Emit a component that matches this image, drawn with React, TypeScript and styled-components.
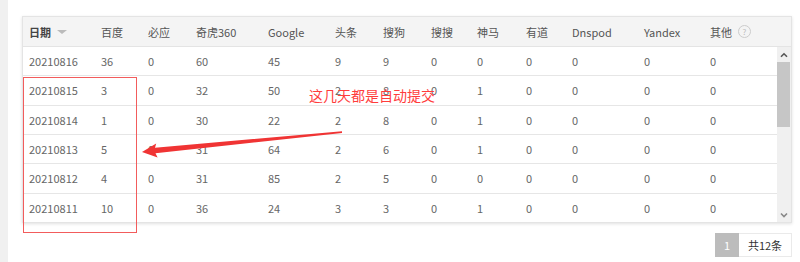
import React from "react";
import styled, { createGlobalStyle } from "styled-components";

const GlobalStyle = createGlobalStyle`
  html, body { margin: 0; padding: 0; background: #fff; }
  body {
    font-family: "Noto Sans CJK SC", "Noto Sans", sans-serif;
    -webkit-font-smoothing: antialiased;
  }
`;

const COLS = [72, 47, 48, 72, 67, 48, 48, 46, 49, 46, 72, 66, 73];
const GRID = COLS.map((c) => `${c}px`).join(" ");

const HEADERS = ["日期", "百度", "必应", "奇虎360", "Google", "头条", "搜狗", "搜搜", "神马", "有道", "Dnspod", "Yandex", "其他"];

const ROWS: (string | number)[][] = [
  ["20210816", 36, 0, 60, 45, 9, 9, 0, 0, 0, 0, 0, 0],
  ["20210815", 3, 0, 32, 50, 2, 8, 0, 1, 0, 0, 0, 0],
  ["20210814", 1, 0, 30, 22, 2, 8, 0, 1, 0, 0, 0, 0],
  ["20210813", 5, 0, 31, 64, 2, 6, 0, 1, 0, 0, 0, 0],
  ["20210812", 4, 0, 31, 85, 2, 5, 0, 0, 0, 0, 0, 0],
  ["20210811", 10, 0, 36, 24, 3, 3, 0, 1, 0, 0, 0, 0],
];

const Page = styled.div`
  display: flex;
  height: 262px;
  overflow: hidden;
`;

const SideStrip = styled.div`
  width: 8px;
  flex: none;
  background: #f0f0f0;
`;

const Content = styled.div`
  flex: 1;
  position: relative;
  padding: 16px 8px 0 14px;
`;

const Card = styled.div`
  border: 1px solid #e4e4e4;
  box-shadow: 0 1px 3px rgba(0, 0, 0, 0.12);
  background: #fff;
`;

const HeaderRow = styled.div`
  display: grid;
  grid-template-columns: ${GRID} 14px;
  height: 29px;
  align-items: center;
  background: #f4f4f4;
  border-bottom: 1px solid #e4e4e4;
`;

const HeadCell = styled.div<{ $strong?: boolean }>`
  display: flex;
  align-items: center;
  gap: 6px;
  padding-left: 6px;
  font-size: 11px;
  color: ${(p) => (p.$strong ? "#444" : "#555")};
  font-weight: ${(p) => (p.$strong ? 700 : 400)};
  white-space: nowrap;
`;

const SortCaret = styled.span`
  width: 0;
  height: 0;
  border-left: 5px solid transparent;
  border-right: 5px solid transparent;
  border-top: 4px solid #bbb;
  margin-top: 1px;
`;

const HelpIcon = styled.span`
  display: inline-flex;
  align-items: center;
  justify-content: center;
  width: 11px;
  height: 11px;
  border: 1px solid #ccc;
  border-radius: 50%;
  color: #bbb;
  font-size: 8px;
  font-weight: 400;
  line-height: 1;
`;

const Body = styled.div`
  display: flex;
  height: 175px;
`;

const Rows = styled.div`
  flex: 1;
  display: flex;
  flex-direction: column;
`;

const Row = styled.div`
  display: grid;
  grid-template-columns: ${GRID};
  flex: 1;
  align-items: center;
  border-bottom: 1px solid #e6e6e6;
  &:last-child {
    border-bottom: none;
  }
`;

const Cell = styled.div`
  padding-left: 6px;
  font-size: 11px;
  color: #666;
  white-space: nowrap;
`;

const Scrollbar = styled.div`
  width: 14px;
  flex: none;
  display: flex;
  flex-direction: column;
  background: #f0f0f0;
`;

const ScrollButton = styled.div`
  height: 15px;
  display: flex;
  align-items: center;
  justify-content: center;
  flex: none;
`;

const Thumb = styled.div`
  height: 65px;
  background: #c6c6c6;
  margin: 0 1px 0 0;
  flex: none;
`;

const TrackRest = styled.div`
  flex: 1;
`;

const Pager = styled.div`
  display: flex;
  justify-content: flex-end;
  margin-top: 10px;
`;

const PageNum = styled.div`
  width: 24px;
  height: 24px;
  display: flex;
  align-items: center;
  justify-content: center;
  background: #bcbcbc;
  color: #fff;
  font-size: 11px;
`;

const Total = styled.div`
  height: 22px;
  padding: 0 8px;
  width: 36px;
  display: flex;
  align-items: center;
  justify-content: center;
  border: 1px solid #eaeaea;
  border-left: none;
  color: #333;
  font-size: 11px;
`;

const RedBox = styled.div`
  position: absolute;
  left: 15px;
  top: 77px;
  width: 112px;
  height: 154px;
  border: 1px solid #f25c5c;
  pointer-events: none;
`;

const Note = styled.div`
  position: absolute;
  left: 301px;
  top: 85px;
  font-size: 14px;
  line-height: 20px;
  color: #ff3c3c;
  white-space: nowrap;
`;

const ArrowSvg = styled.svg`
  position: absolute;
  left: 122px;
  top: 120px;
  width: 230px;
  height: 45px;
  overflow: visible;
`;

const Chevron: React.FC<{ up?: boolean; color: string }> = ({ up, color }) => (
  <svg width="8" height="6" viewBox="0 0 8 6">
    <path
      d={up ? "M1 4.8 L4 1.8 L7 4.8" : "M1 1.5 L4 4.5 L7 1.5"}
      fill="none"
      stroke={color}
      strokeWidth="1.6"
    />
  </svg>
);

export default function App() {
  return (
    <>
      <GlobalStyle />
      <Page>
        <SideStrip />
        <Content>
          <Card>
            <HeaderRow>
              {HEADERS.map((h, i) => (
                <HeadCell key={h} $strong={i === 0}>
                  {h}
                  {i === 0 && <SortCaret />}
                  {i === HEADERS.length - 1 && <HelpIcon>?</HelpIcon>}
                </HeadCell>
              ))}
              <div />
            </HeaderRow>
            <Body>
              <Rows>
                {ROWS.map((r) => (
                  <Row key={String(r[0])}>
                    {r.map((v, i) => (
                      <Cell key={i}>{v}</Cell>
                    ))}
                  </Row>
                ))}
              </Rows>
              <Scrollbar>
                <ScrollButton>
                  <Chevron up color="#555" />
                </ScrollButton>
                <Thumb />
                <TrackRest />
                <ScrollButton>
                  <Chevron color="#888" />
                </ScrollButton>
              </Scrollbar>
            </Body>
          </Card>
          <Pager>
            <PageNum>1</PageNum>
            <Total>共12条</Total>
          </Pager>
          <RedBox />
          <Note>这几天都是自动提交</Note>
          <ArrowSvg viewBox="0 0 230 45">
            <polygon
              points="12,32 27.6,37.5 25.5,33.2 212,13 212,11.2 25,27.7 26.2,23.5"
              fill="#f03434"
            />
          </ArrowSvg>
        </Content>
      </Page>
    </>
  );
}
